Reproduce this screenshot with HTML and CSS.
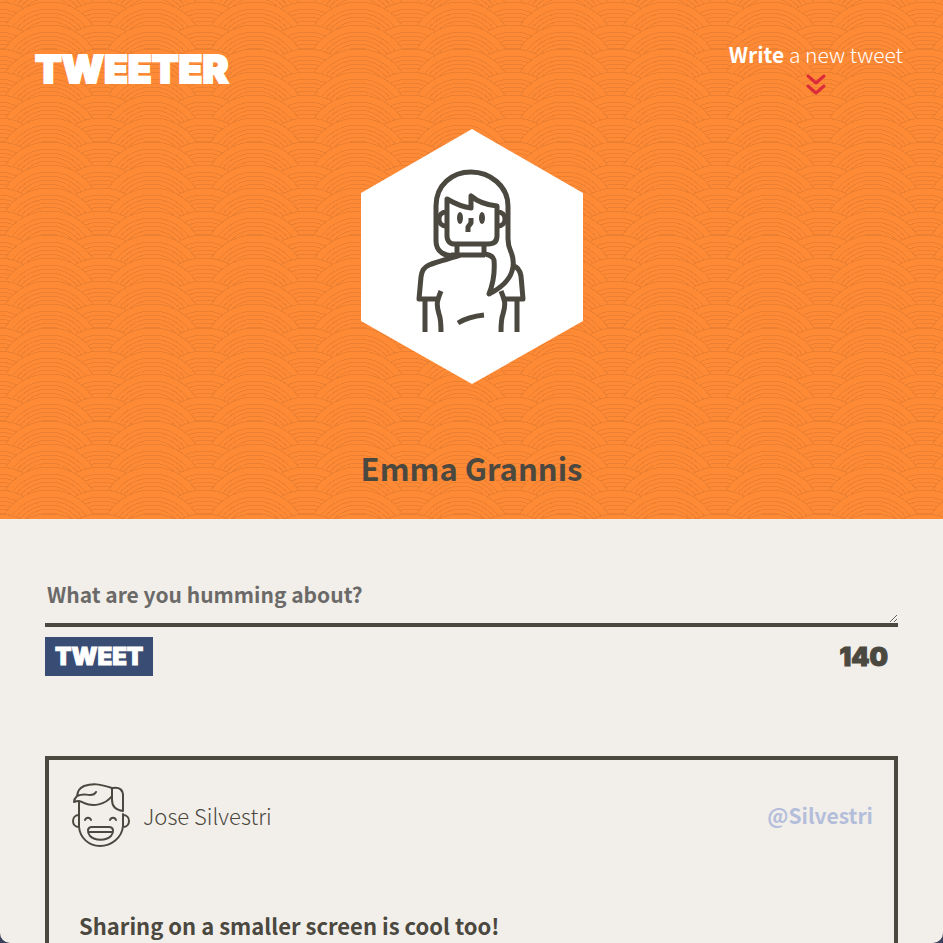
FILE: index.html
```html
<!DOCTYPE html>
<html lang="en">
<head>
<meta charset="utf-8">
<meta name="viewport" content="width=device-width, initial-scale=1">
<title>Tweeter</title>
<link rel="stylesheet" href="styles.css">
</head>
<body>
<div class="page">
<header class="hero">
  <svg class="waves" aria-hidden="true">
    <defs>
      <g id="wave" class="wave">
        <circle r="53"/><circle r="46"/><circle r="42"/><circle r="38"/><circle r="34"/><circle r="30"/>
      </g>
      <g id="row">
        <use href="#wave" x="-2"/><use href="#wave" x="101"/><use href="#wave" x="49"/>
      </g>
      <pattern id="waves" width="103" height="93" patternUnits="userSpaceOnUse">
        <use href="#row" y="9"/><use href="#row" y="32"/><use href="#row" y="55"/><use href="#row" y="78"/>
        <use href="#row" y="102"/><use href="#row" y="125"/><use href="#row" y="148"/>
      </pattern>
    </defs>
    <rect width="100%" height="100%" fill="url(#waves)"/>
  </svg>
  <nav class="nav">
    <a class="logo" href="#">TWEETER</a>
    <a class="compose-link" href="#tweet-text">
      <span><strong>Write</strong> a new tweet</span>
      <svg class="chevrons" viewBox="0 0 20 22" aria-hidden="true"><path d="M2 3l8 7 8-7M2 13l8 7 8-7"/></svg>
    </a>
  </nav>
  <div class="profile">
    <svg class="avatar" viewBox="0 0 222 256" role="img" aria-label="Emma Grannis">
      <path fill="#fff" d="M111 1l111 64v128l-111 63L0 193V65z"/>
      <g transform="translate(39 31)" class="avatar-lines">
        <path d="M59 96c-15 3-23-4-23-14V47C36 26 52 13 71 13s37 14 37 34v33c0 14 7 13 5 28-2 13-14 22-24 27 4-10 6-22 5-34-1-4-4-5-9-6"/>
        <path d="M47 40v37c0 5 3 8 8 8h33c6 0 9-3 9-8V47c-10-1-19-4-26-10v12c-10-1-17-5-24-9z"/>
        <path d="M46 53c-4 0-7 3-7 7s3 7 7 7M98 53c4 0 7 3 7 7s-3 7-7 7M57 85v10M84 85v10M51 96h34M61 96c-12 4-22 6-32 10-6 3-7 6-8 12l-2 22h21M113 107c5 1 7 4 8 10l2 23h-20"/>
        <path d="M25 142v31M117 142v31M41 132c-4 10-5 13-2 23 2 5 2 10 2 18M101 132c4 10 5 13 2 23-2 5-2 10-2 18M58 164c8-5 16-7 26-8M71 59v5l-3 4v5"/>
        <ellipse class="eye" cx="60" cy="59" rx="3" ry="6"/><ellipse class="eye" cx="82" cy="59" rx="3" ry="6"/>
      </g>
    </svg>
    <h1 class="name">Emma Grannis</h1>
  </div>
</header>
<main class="content">
  <form class="composer">
    <textarea id="tweet-text" class="tweet-text" aria-label="Tweet" placeholder="What are you humming about?"></textarea>
    <div class="composer-actions">
      <button class="tweet-button" type="submit">TWEET</button>
      <output class="counter" for="tweet-text">140</output>
    </div>
  </form>
  <article class="tweet">
    <header class="tweet-header">
      <svg class="face" viewBox="0 0 60 66" aria-hidden="true">
        <path d="M8 20v25c1 11 10 19 21 19s22-8 23-20V32M8 33c-8 0-8 12 0 12M52 33c8 0 8 12 0 12"/>
        <path d="M3 20c5-2 6-1 10 1 9 4 21 2 28-7V6C29 2 22 1 13 4 7 7 7 10 6 14c-2 2-3 4-3 6zM6 14c7-3 8-1 13-1 3 0 5-1 6-3"/>
        <path d="M42 6c7-1 10 2 10 8v15c-7-1-11-5-11-11V6M14 38c1-3 5-3 6 0M39 38c1-3 5-3 6 0"/>
        <path d="M21 45h17c5 0 5 5 2 9-5 5-16 5-21 0-3-4-3-9 2-9zM18 50h24"/>
      </svg>
      <span class="author">Jose Silvestri</span>
      <a class="handle" href="#">@Silvestri</a>
    </header>
    <p class="tweet-body">Sharing on a smaller screen is cool too!</p>
  </article>
</main>
</div>
</body>
</html>
```
FILE: styles.css
```css
* { box-sizing: border-box; }
html { background: #3b415c; }
body {
  margin: 0;
  color: #4b4840;
  font: 300 22px/36px "Noto Sans CJK JP", "Noto Sans", sans-serif;
}
a { color: inherit; text-decoration: none; }
.page {
  display: flex;
  flex-direction: column;
  height: 100vh;
  overflow: hidden;
  border-radius: 0 0 10px 10px;
  background: #f2efea;
}
.hero { position: relative; flex: none; padding: 40px 0 30px; background: #ff8a35; }
.waves { position: absolute; inset: 0; width: 100%; height: 100%; }
.wave { fill: #ff8a35; stroke: #ec8032; shape-rendering: crispEdges; }
.nav, .profile { position: relative; }
.nav { display: flex; justify-content: space-between; align-items: flex-start; padding: 0 40px 0 35px; color: #fff; }
.logo {
  padding-top: 5px;
  font: 900 39px/48px Inter, sans-serif;
  -webkit-text-stroke: 2px #fff;
}
.compose-link { display: flex; flex-direction: column; align-items: center; gap: 5px; font-size: 21px; line-height: 28px; }
.compose-link strong { font-weight: 700; }
.chevrons { width: 20px; height: 22px; fill: none; stroke: #dc2a3a; stroke-width: 3; stroke-linecap: round; stroke-linejoin: round; }
.profile { display: flex; flex-direction: column; align-items: center; padding-top: 33px; }
.avatar { width: 222px; height: 256px; }
.avatar-lines { fill: none; stroke: #4b4840; stroke-width: 5; stroke-linejoin: round; }
.avatar-lines .eye { fill: #4b4840; stroke: none; }
.name { margin: 62px 0 0; font-size: 31px; line-height: 43px; font-weight: 700; }
.content { flex: none; padding: 54px 45px 0; }
.tweet-text {
  display: block;
  width: 100%;
  height: 54px;
  padding: 2px;
  border: 0;
  border-bottom: 4px solid #4b4840;
  background: transparent;
  color: #4b4840;
  font: 700 21px/38px "Noto Sans CJK JP", "Noto Sans", sans-serif;
  outline: 0;
  overflow: hidden;
}
.tweet-text::placeholder { color: #6b6a68; }
.composer-actions { display: flex; justify-content: space-between; align-items: center; padding: 10px 10px 0 0; }
.tweet-button {
  padding: 0 10px;
  border: 0;
  background: #384c74;
  color: #fff;
  font: 900 24px/39px Inter, sans-serif;
  -webkit-text-stroke: 1px #fff;
}
.counter { font: 900 26px/39px Inter, sans-serif; -webkit-text-stroke: 1px #4b4840; }
.tweet { margin-top: 80px; padding: 22px 21px 0 22px; border: 4px solid #4b4840; border-bottom: 0; }
.tweet-header { display: flex; align-items: center; gap: 12px; }
.face { width: 60px; height: 66px; fill: none; stroke: #4b4840; stroke-width: 2; stroke-linecap: round; stroke-linejoin: round; }
.handle { margin-left: auto; color: #b4bedb; font-size: 21px; font-weight: 700; }
.tweet-body { margin: 59px 8px 0; font-weight: 700; }
```
